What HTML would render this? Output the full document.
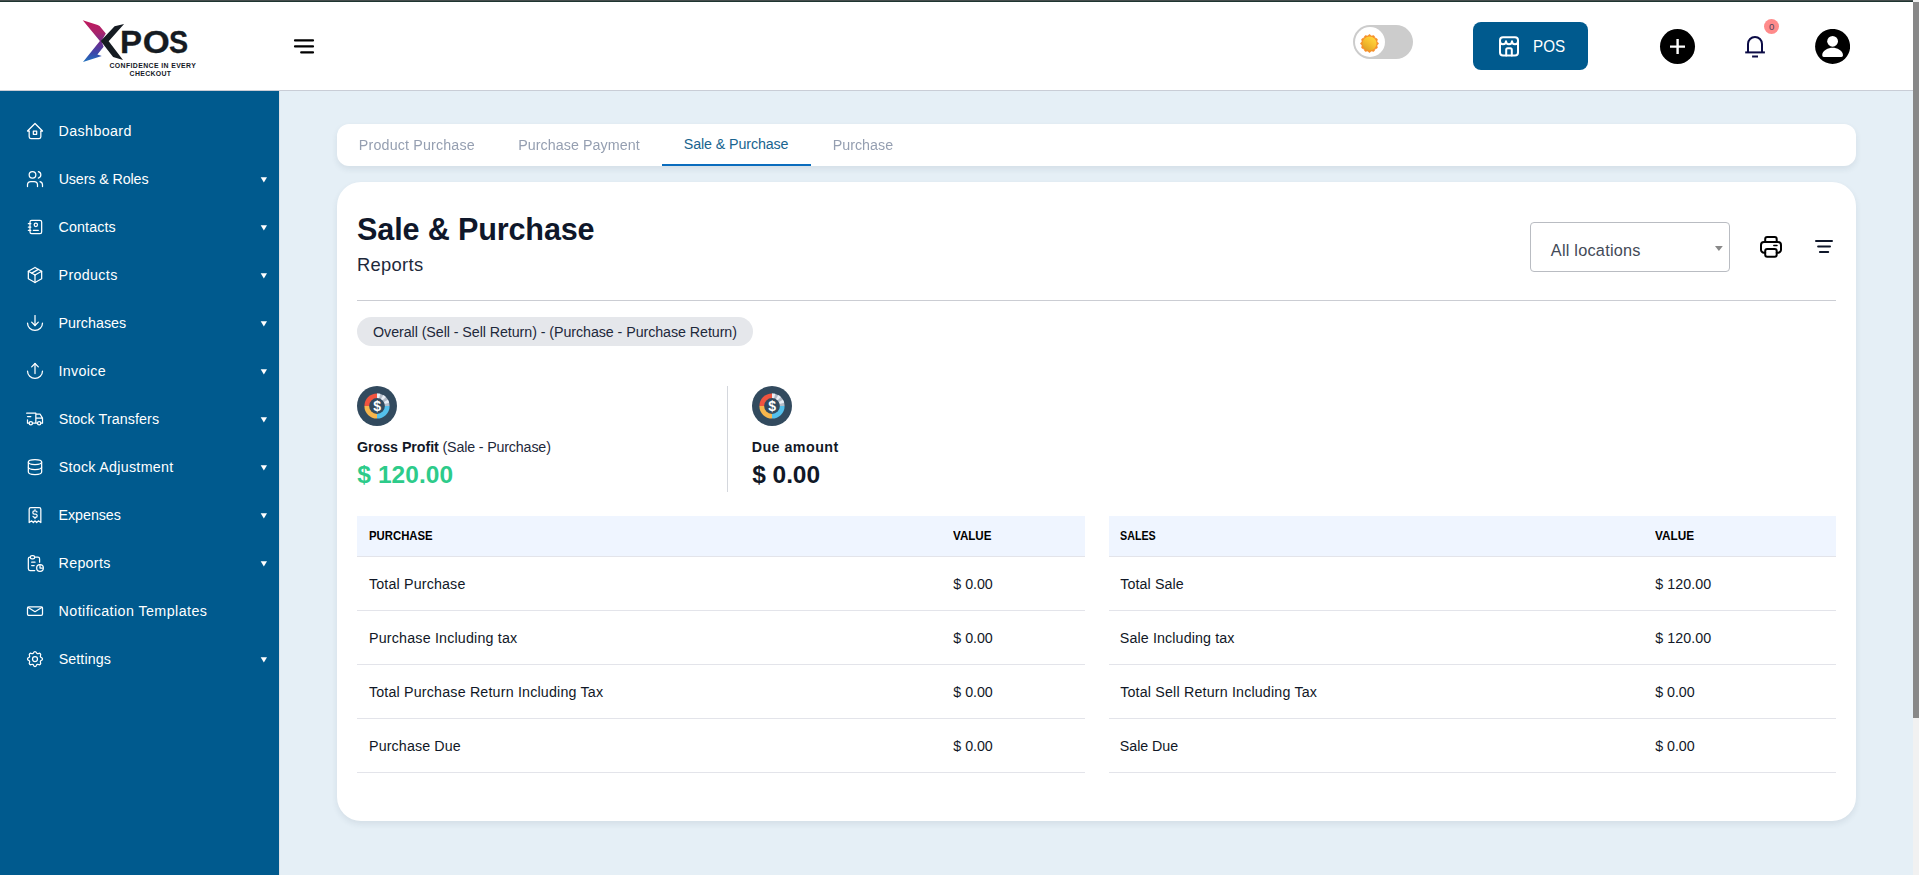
<!DOCTYPE html>
<html lang="en"><head><meta charset="utf-8"><title>Sale &amp; Purchase</title>
<style>
*{box-sizing:border-box;margin:0;padding:0}
html,body{width:1919px;height:875px;overflow:hidden;background:#e5eff6;font-family:"Liberation Sans",sans-serif}
.abs{position:absolute;display:block}
.t{position:absolute;white-space:nowrap;font-family:"Liberation Sans",sans-serif}
.bm{display:inline-block;width:0;height:0}
#page{position:relative;width:1919px;height:875px;overflow:hidden;background:#e5eff6}
</style></head><body><div id="page">
<!-- header -->
<div class="abs" style="left:0;top:0;width:1913px;height:90px;background:#fff"></div>
<div class="abs" style="left:0;top:90px;width:1913px;height:1px;background:#c9cdd6"></div>
<div class="abs" style="left:0;top:0;width:1919px;height:1px;background:#454d4d"></div>
<div class="abs" style="left:0;top:1px;width:1919px;height:1px;background:#1f3531"></div>
<!-- sidebar -->
<div class="abs" style="left:0;top:91px;width:279px;height:784px;background:#005a8e"></div>
<div class="abs" style="left:279px;top:91px;width:1px;height:784px;background:#dfe1e5"></div>
<!-- scrollbar -->
<div class="abs" style="left:1913px;top:0;width:6px;height:875px;background:#f1f1f1"></div>
<div class="abs" style="left:1913px;top:2px;width:6px;height:716px;background:#888"></div>

<!-- logo -->
<svg class="abs" style="left:78px;top:16px" width="60" height="50" viewBox="78 16 60 50">
<defs><linearGradient id="lgx" x1="0" y1="20" x2="0" y2="62" gradientUnits="userSpaceOnUse">
<stop offset="0" stop-color="#c2185b"/><stop offset="0.3" stop-color="#a8246c"/><stop offset="0.55" stop-color="#6a2c91"/><stop offset="0.8" stop-color="#3949ab"/><stop offset="1" stop-color="#1e73be"/></linearGradient></defs>
<polygon points="82.75,20.24 97.7,25.1 99.6,25.9 105.8,33.55 101.5,40.9 103.6,46.7 97.4,54.4 101.8,56.1 83,61.9 99.9,40.9" fill="url(#lgx)"/>
<polygon points="124.07,23.9 114.6,26.2 100.7,40.9 113.1,56.95 123,59.9 108.7,41.2" fill="#151b22"/>
</svg>
<svg class="abs" style="left:118px;top:26px" width="74" height="32" viewBox="118 26 74 32" font-family="Liberation Sans, sans-serif" font-weight="700" font-size="100" fill="#151b22" stroke="#151b22" stroke-width="1">
<text transform="translate(119.99,53.3) scale(0.3304,0.32)">P</text>
<text transform="translate(142.78,53.3) scale(0.3468,0.32)">O</text>
<text transform="translate(168.97,53.3) scale(0.2871,0.32)">S</text>
</svg>

<!-- hamburger -->
<svg class="abs" style="left:290px;top:34px" width="28" height="24" viewBox="290 34 28 24" fill="none" stroke="#000" stroke-width="2.2" stroke-linecap="round">
<path d="M295 40.4H313M295 46.4H313M301.2 52.4H313"/></svg>

<!-- toggle -->
<div class="abs" style="left:1353px;top:25px;width:60px;height:34px;border-radius:17px;background:#ccc"></div>
<div class="abs" style="left:1355px;top:27px;width:30px;height:30px;border-radius:15px;background:#fff"></div>
<svg class="abs" style="left:1358.5px;top:32.5px" width="21" height="21" viewBox="-10.5 -10.5 21 21">
<defs><linearGradient id="sun" x1="0.8" y1="0.1" x2="0.2" y2="0.95"><stop offset="0" stop-color="#ffd63c"/><stop offset="0.45" stop-color="#f7c02f"/><stop offset="1" stop-color="#dfa227"/></linearGradient></defs>
<polygon points="0.00,-8.95 1.99,-7.44 4.47,-7.75 5.44,-5.44 7.75,-4.47 7.44,-1.99 8.95,0.00 7.44,1.99 7.75,4.47 5.44,5.44 4.47,7.75 1.99,7.44 0.00,8.95 -1.99,7.44 -4.47,7.75 -5.44,5.44 -7.75,4.48 -7.44,1.99 -8.95,0.00 -7.44,-1.99 -7.75,-4.48 -5.44,-5.44 -4.48,-7.75 -1.99,-7.44" fill="#f6912b" stroke="#f6912b" stroke-width="0.8" stroke-linejoin="round"/>
<circle r="7.0" fill="url(#sun)"/>
</svg>

<!-- POS button -->
<div class="abs" style="left:1473px;top:22px;width:115px;height:48px;border-radius:8px;background:#005a8e"></div>
<svg class="abs" style="left:1497px;top:34px" width="24" height="24" viewBox="1497 34 24 24" fill="none" stroke="#fff" stroke-width="2" stroke-linecap="round" stroke-linejoin="round">
<rect x="1500" y="37.2" width="18" height="18.4" rx="3"/>
<path d="M1500 41.2a3 3 0 0 0 6 0a3 3 0 0 0 6 0a3 3 0 0 0 6 0" />
<path d="M1506.2 55.6v-5.8a1.5 1.5 0 0 1 1.5 -1.5h2.6a1.5 1.5 0 0 1 1.5 1.5v5.8"/>
</svg>

<!-- plus -->
<div class="abs" style="left:1660px;top:29px;width:35px;height:35px;border-radius:50%;background:#000"></div>
<svg class="abs" style="left:1660px;top:29px" width="35" height="35" viewBox="0 0 35 35" stroke="#fff" stroke-width="2.4" stroke-linecap="butt"><path d="M10 17.6H25M17.6 10V25"/></svg>

<!-- bell -->
<svg class="abs" style="left:1743px;top:33px" width="24" height="27" viewBox="1743 33 24 27" fill="none" stroke="#0b0b45" stroke-width="2" stroke-linecap="butt">
<path d="M1748 52.4V44a7 7 0 0 1 14 0V52.4"/><path d="M1745.2 52.4H1764.9"/><path d="M1752.1 56.5H1758"/></svg>
<div class="abs" style="left:1764px;top:19px;width:15px;height:15px;border-radius:50%;background:#ff8b8b"></div>

<!-- user -->
<svg class="abs" style="left:1815px;top:29px" width="35" height="35" viewBox="1815 29 35 35">
<circle cx="1832.6" cy="46.4" r="17.5" fill="#000"/>
<circle cx="1832.6" cy="41.3" r="5.4" fill="#fff"/>
<path d="M1822.2 55.3c0 -5 6.2 -7.5 10.4 -7.5s10.4 2.5 10.4 7.5a1.6 1.6 0 0 1 -1.6 1.6h-17.6a1.6 1.6 0 0 1 -1.6 -1.6z" fill="#fff"/>
</svg>

<svg class="abs" style="left:25px;top:121px" width="20" height="20" viewBox="0 0 24 24" fill="none" stroke="#fff" stroke-width="1.5" stroke-linecap="round" stroke-linejoin="round"><path d="M5 12l-2 0l9 -9l9 9l-2 0"/><path d="M5 12v7a2 2 0 0 0 2 2h10a2 2 0 0 0 2 -2v-7"/><path d="M10 12h4v4h-4z"/></svg>
<svg class="abs" style="left:25px;top:169px" width="20" height="20" viewBox="0 0 24 24" fill="none" stroke="#fff" stroke-width="1.5" stroke-linecap="round" stroke-linejoin="round"><path d="M9 7m-4 0a4 4 0 1 0 8 0a4 4 0 1 0 -8 0"/><path d="M3 21v-2a4 4 0 0 1 4 -4h4a4 4 0 0 1 4 4v2"/><path d="M16 3.13a4 4 0 0 1 0 7.75"/><path d="M21 21v-2a4 4 0 0 0 -3 -3.85"/></svg>
<svg class="abs" style="left:258px;top:174.6px" width="12" height="10" viewBox="0 0 12 10"><polygon points="2.7,2.3 9,2.3 5.85,7.6" fill="#fff"/></svg>
<svg class="abs" style="left:25px;top:217px" width="20" height="20" viewBox="0 0 24 24" fill="none" stroke="#fff" stroke-width="1.5" stroke-linecap="round" stroke-linejoin="round"><path d="M20 6v12a2 2 0 0 1 -2 2h-10a2 2 0 0 1 -2 -2v-12a2 2 0 0 1 2 -2h10a2 2 0 0 1 2 2z"/><path d="M10 16h6"/><path d="M13 9.4m-2 0a2 2 0 1 0 4 0a2 2 0 1 0 -4 0"/><path d="M4 8h3"/><path d="M4 12h3"/><path d="M4 16h3"/></svg>
<svg class="abs" style="left:258px;top:222.6px" width="12" height="10" viewBox="0 0 12 10"><polygon points="2.7,2.3 9,2.3 5.85,7.6" fill="#fff"/></svg>
<svg class="abs" style="left:25px;top:265px" width="20" height="20" viewBox="0 0 24 24" fill="none" stroke="#fff" stroke-width="1.5" stroke-linecap="round" stroke-linejoin="round"><path d="M12 3l8 4.5l0 9l-8 4.5l-8 -4.5l0 -9l8 -4.5"/><path d="M12 12l8 -4.5"/><path d="M12 12l0 9"/><path d="M12 12l-8 -4.5"/><path d="M16 5.25l-8 4.5"/></svg>
<svg class="abs" style="left:258px;top:270.6px" width="12" height="10" viewBox="0 0 12 10"><polygon points="2.7,2.3 9,2.3 5.85,7.6" fill="#fff"/></svg>
<svg class="abs" style="left:25px;top:313px" width="20" height="20" viewBox="0 0 24 24" fill="none" stroke="#fff" stroke-width="1.5" stroke-linecap="round" stroke-linejoin="round"><path d="M12 3v12"/><path d="M16 11l-4 4l-4 -4"/><path d="M3 12a9 9 0 0 0 18 0"/></svg>
<svg class="abs" style="left:258px;top:318.6px" width="12" height="10" viewBox="0 0 12 10"><polygon points="2.7,2.3 9,2.3 5.85,7.6" fill="#fff"/></svg>
<svg class="abs" style="left:25px;top:361px" width="20" height="20" viewBox="0 0 24 24" fill="none" stroke="#fff" stroke-width="1.5" stroke-linecap="round" stroke-linejoin="round"><path d="M12 15v-12"/><path d="M16 7l-4 -4l-4 4"/><path d="M3 12a9 9 0 0 0 18 0"/></svg>
<svg class="abs" style="left:258px;top:366.6px" width="12" height="10" viewBox="0 0 12 10"><polygon points="2.7,2.3 9,2.3 5.85,7.6" fill="#fff"/></svg>
<svg class="abs" style="left:25px;top:409px" width="20" height="20" viewBox="0 0 24 24" fill="none" stroke="#fff" stroke-width="1.5" stroke-linecap="round" stroke-linejoin="round"><path d="M7 17m-2 0a2 2 0 1 0 4 0a2 2 0 1 0 -4 0"/><path d="M17 17m-2 0a2 2 0 1 0 4 0a2 2 0 1 0 -4 0"/><path d="M5 17h-2v-4m-1 -8h11v12m-4 0h6m4 0h2v-6h-8m0 -5h5l3 5"/><path d="M3 9l4 0"/></svg>
<svg class="abs" style="left:258px;top:414.6px" width="12" height="10" viewBox="0 0 12 10"><polygon points="2.7,2.3 9,2.3 5.85,7.6" fill="#fff"/></svg>
<svg class="abs" style="left:25px;top:457px" width="20" height="20" viewBox="0 0 24 24" fill="none" stroke="#fff" stroke-width="1.5" stroke-linecap="round" stroke-linejoin="round"><path d="M12 6m-8 0a8 3 0 1 0 16 0a8 3 0 1 0 -16 0"/><path d="M4 6v6a8 3 0 0 0 16 0v-6"/><path d="M4 12v6a8 3 0 0 0 16 0v-6"/></svg>
<svg class="abs" style="left:258px;top:462.6px" width="12" height="10" viewBox="0 0 12 10"><polygon points="2.7,2.3 9,2.3 5.85,7.6" fill="#fff"/></svg>
<svg class="abs" style="left:25px;top:505px" width="20" height="20" viewBox="0 0 24 24" fill="none" stroke="#fff" stroke-width="1.5" stroke-linecap="round" stroke-linejoin="round"><path d="M5 21v-16a2 2 0 0 1 2 -2h10a2 2 0 0 1 2 2v16l-3 -2l-2 2l-2 -2l-2 2l-2 -2l-3 2"/><path d="M14.4 8.4a1.9 1.9 0 0 0 -1.7 -1.2h-1.4a1.9 1.9 0 0 0 0 3.8h1.4a1.9 1.9 0 0 1 0 3.8h-1.4a1.9 1.9 0 0 1 -1.7 -1.2M12 5.7v1.5M12 14.8v1.4"/></svg>
<svg class="abs" style="left:258px;top:510.6px" width="12" height="10" viewBox="0 0 12 10"><polygon points="2.7,2.3 9,2.3 5.85,7.6" fill="#fff"/></svg>
<svg class="abs" style="left:25px;top:553px" width="20" height="20" viewBox="0 0 24 24" fill="none" stroke="#fff" stroke-width="1.5" stroke-linecap="round" stroke-linejoin="round"><path d="M6.4 5h-.4a2 2 0 0 0 -2 2v12a2 2 0 0 0 2 2h5.697"/><path d="M18 14v4h3"/><path d="M17.5 11v-4a2 2 0 0 0 -2 -2h-4"/><rect x="6.4" y="3" width="5.2" height="4" rx="2"/><path d="M18 18m-4 0a4 4 0 1 0 8 0a4 4 0 1 0 -8 0"/><path d="M8 11h4"/><path d="M8 15h3"/></svg>
<svg class="abs" style="left:258px;top:558.6px" width="12" height="10" viewBox="0 0 12 10"><polygon points="2.7,2.3 9,2.3 5.85,7.6" fill="#fff"/></svg>
<svg class="abs" style="left:25px;top:601px" width="20" height="20" viewBox="0 0 24 24" fill="none" stroke="#fff" stroke-width="1.5" stroke-linecap="round" stroke-linejoin="round"><path d="M3 8.6a1.6 1.6 0 0 1 1.6 -1.6h14.8a1.6 1.6 0 0 1 1.6 1.6v7a1.6 1.6 0 0 1 -1.6 1.6h-14.8a1.6 1.6 0 0 1 -1.6 -1.6v-7z"/><path d="M3.4 7.6l8.6 5.2l8.6 -5.2"/></svg>
<svg class="abs" style="left:25px;top:649px" width="20" height="20" viewBox="0 0 24 24" fill="none" stroke="#fff" stroke-width="1.5" stroke-linecap="round" stroke-linejoin="round"><path d="M10.325 4.317c.426 -1.756 2.924 -1.756 3.35 0a1.724 1.724 0 0 0 2.573 1.066c1.543 -.94 3.31 .826 2.37 2.37a1.724 1.724 0 0 0 1.065 2.572c1.756 .426 1.756 2.924 0 3.35a1.724 1.724 0 0 0 -1.066 2.573c.94 1.543 -.826 3.31 -2.37 2.37a1.724 1.724 0 0 0 -2.572 1.065c-.426 1.756 -2.924 1.756 -3.35 0a1.724 1.724 0 0 0 -2.573 -1.066c-1.543 .94 -3.31 -.826 -2.37 -2.37a1.724 1.724 0 0 0 -1.065 -2.572c-1.756 -.426 -1.756 -2.924 0 -3.35a1.724 1.724 0 0 0 1.066 -2.573c-.94 -1.543 .826 -3.31 2.37 -2.37c1 .608 2.296 .07 2.572 -1.065z"/><path d="M9 12a3 3 0 1 0 6 0a3 3 0 0 0 -6 0"/></svg>
<svg class="abs" style="left:258px;top:654.6px" width="12" height="10" viewBox="0 0 12 10"><polygon points="2.7,2.3 9,2.3 5.85,7.6" fill="#fff"/></svg>

<!-- tabs card -->
<div class="abs" style="left:337px;top:124px;width:1519px;height:42px;border-radius:12px;background:#fff;box-shadow:0 3px 6px rgba(30,50,80,0.09)"></div>
<div class="abs" style="left:662px;top:164px;width:149px;height:2px;background:#0a6cbd"></div>

<!-- main card -->
<div class="abs" style="left:337px;top:182px;width:1519px;height:639px;border-radius:24px;background:#fff;box-shadow:0 3px 6px rgba(30,50,80,0.09)"></div>
<div class="abs" style="left:357px;top:300px;width:1479px;height:1px;background:#cbcdd3"></div>

<!-- select -->
<div class="abs" style="left:1530px;top:222px;width:200px;height:50px;border:1px solid #b9bcc2;border-radius:4px;background:#fff"></div>
<svg class="abs" style="left:1712px;top:243px" width="14" height="10" viewBox="1712 243 14 10"><polygon points="1715,246 1722.8,246 1718.9,251" fill="#888"/></svg>

<!-- printer -->
<svg class="abs" style="left:1758px;top:234px" width="26" height="26" viewBox="1758 234 26 26" fill="none" stroke="#000" stroke-width="2" stroke-linecap="round" stroke-linejoin="round">
<path d="M1765.2 242.1v-3.2a2 2 0 0 1 2 -2h7.5a2 2 0 0 1 2 2v3.2"/>
<path d="M1765.2 252.7h-1.2a3 3 0 0 1 -3 -3v-4.6a3 3 0 0 1 3 -3h14a3 3 0 0 1 3 3v4.6a3 3 0 0 1 -3 3h-1.3"/>
<rect x="1765.2" y="249.1" width="11.5" height="7.7" rx="2"/>
<path d="M1773.8 245.4h3.2" stroke-width="1.5"/>
</svg>
<!-- filter -->
<svg class="abs" style="left:1812px;top:236px" width="24" height="20" viewBox="1812 236 24 20" fill="none" stroke="#0f172a" stroke-width="2" stroke-linecap="round">
<path d="M1816 240.9H1832M1818.1 246.5H1830M1819.9 252H1828.2"/></svg>

<!-- chip -->
<div class="abs" style="left:357px;top:317px;width:396px;height:29px;border-radius:15px;background:#e5e7eb"></div>

<!-- stats -->
<svg class="abs" style="left:357px;top:386px" width="40" height="40" viewBox="0 0 40 40">
<circle cx="20" cy="20" r="20" fill="#324a5e"/>
<path d="M20 20 L20 7.4 A12.6 12.6 0 0 0 7.4 20 Z" fill="#f1543f"/>
<path d="M20 20 L7.4 20 A12.6 12.6 0 0 0 20 32.6 Z" fill="#f8b64c"/>
<path d="M20 20 L20 32.6 A12.6 12.6 0 0 0 32.6 20 Z" fill="#54c0eb"/>
<path d="M20 20 L32.6 20 A12.6 12.6 0 0 0 20 7.4 Z" fill="#b4bcc8"/>
<path d="M20 20 L20 7.4 A12.6 12.6 0 0 1 23.3 7.85 Z" fill="#e9eef5"/>
<path d="M20 20 L26.3 9.1 A12.6 12.6 0 0 1 28.9 11.1 Z" fill="#e9eef5"/>
<path d="M20 20 L30.9 13.7 A12.6 12.6 0 0 1 32.15 16.7 Z" fill="#e9eef5"/>
<circle cx="20" cy="20" r="7.9" fill="#324a5e"/>
<text x="20.1" y="24.9" text-anchor="middle" font-family="Liberation Sans, sans-serif" font-weight="700" font-size="14" fill="#fff">$</text>
</svg>
<svg class="abs" style="left:752px;top:386px" width="40" height="40" viewBox="0 0 40 40">
<circle cx="20" cy="20" r="20" fill="#324a5e"/>
<path d="M20 20 L20 7.4 A12.6 12.6 0 0 0 7.4 20 Z" fill="#f1543f"/>
<path d="M20 20 L7.4 20 A12.6 12.6 0 0 0 20 32.6 Z" fill="#f8b64c"/>
<path d="M20 20 L20 32.6 A12.6 12.6 0 0 0 32.6 20 Z" fill="#54c0eb"/>
<path d="M20 20 L32.6 20 A12.6 12.6 0 0 0 20 7.4 Z" fill="#b4bcc8"/>
<path d="M20 20 L20 7.4 A12.6 12.6 0 0 1 23.3 7.85 Z" fill="#e9eef5"/>
<path d="M20 20 L26.3 9.1 A12.6 12.6 0 0 1 28.9 11.1 Z" fill="#e9eef5"/>
<path d="M20 20 L30.9 13.7 A12.6 12.6 0 0 1 32.15 16.7 Z" fill="#e9eef5"/>
<circle cx="20" cy="20" r="7.9" fill="#324a5e"/>
<text x="20.1" y="24.9" text-anchor="middle" font-family="Liberation Sans, sans-serif" font-weight="700" font-size="14" fill="#fff">$</text>
</svg>
<div class="abs" style="left:727px;top:386px;width:1px;height:106px;background:#d4d7dd"></div>

<!-- tables -->
<div class="abs" style="left:357px;top:516px;width:728px;height:40px;background:#eff5ff"></div>
<div class="abs" style="left:1109px;top:516px;width:727px;height:40px;background:#eff5ff"></div>
<div class="abs" style="left:357px;top:556px;width:728px;height:1px;background:#e3e4ea"></div><div class="abs" style="left:1109px;top:556px;width:727px;height:1px;background:#e3e4ea"></div><div class="abs" style="left:357px;top:610px;width:728px;height:1px;background:#e3e4ea"></div><div class="abs" style="left:1109px;top:610px;width:727px;height:1px;background:#e3e4ea"></div><div class="abs" style="left:357px;top:664px;width:728px;height:1px;background:#e3e4ea"></div><div class="abs" style="left:1109px;top:664px;width:727px;height:1px;background:#e3e4ea"></div><div class="abs" style="left:357px;top:718px;width:728px;height:1px;background:#e3e4ea"></div><div class="abs" style="left:1109px;top:718px;width:727px;height:1px;background:#e3e4ea"></div><div class="abs" style="left:357px;top:772px;width:728px;height:1px;background:#e3e4ea"></div><div class="abs" style="left:1109px;top:772px;width:727px;height:1px;background:#e3e4ea"></div>

<div class="t" id="m0" style="left:58.56px;top:124.00px;font-size:14.28px;line-height:14.28px;font-weight:400;color:#fff;letter-spacing:0.386px;">Dashboard</div>
<div class="t" id="m1" style="left:58.63px;top:172.00px;font-size:14.28px;line-height:14.28px;font-weight:400;color:#fff;letter-spacing:-0.100px;">Users &amp; Roles</div>
<div class="t" id="m2" style="left:58.59px;top:220.00px;font-size:14.28px;line-height:14.28px;font-weight:400;color:#fff;letter-spacing:0.117px;">Contacts</div>
<div class="t" id="m3" style="left:58.56px;top:268.00px;font-size:14.28px;line-height:14.28px;font-weight:400;color:#fff;letter-spacing:0.349px;">Products</div>
<div class="t" id="m4" style="left:58.56px;top:316.00px;font-size:14.28px;line-height:14.28px;font-weight:400;color:#fff;letter-spacing:0.029px;">Purchases</div>
<div class="t" id="m5" style="left:58.41px;top:364.00px;font-size:14.28px;line-height:14.28px;font-weight:400;color:#fff;letter-spacing:0.357px;">Invoice</div>
<div class="t" id="m6" style="left:58.66px;top:412.00px;font-size:14.28px;line-height:14.28px;font-weight:400;color:#fff;letter-spacing:0.095px;">Stock Transfers</div>
<div class="t" id="m7" style="left:58.66px;top:460.00px;font-size:14.28px;line-height:14.28px;font-weight:400;color:#fff;letter-spacing:0.289px;">Stock Adjustment</div>
<div class="t" id="m8" style="left:58.56px;top:508.00px;font-size:14.28px;line-height:14.28px;font-weight:400;color:#fff;letter-spacing:-0.045px;">Expenses</div>
<div class="t" id="m9" style="left:58.56px;top:556.00px;font-size:14.28px;line-height:14.28px;font-weight:400;color:#fff;letter-spacing:0.298px;">Reports</div>
<div class="t" id="m10" style="left:58.56px;top:604.00px;font-size:14.28px;line-height:14.28px;font-weight:400;color:#fff;letter-spacing:0.431px;">Notification Templates</div>
<div class="t" id="m11" style="left:58.66px;top:652.00px;font-size:14.28px;line-height:14.28px;font-weight:400;color:#fff;letter-spacing:0.099px;">Settings</div>
<div class="t" id="tab0" style="left:358.86px;top:138.00px;font-size:14.28px;line-height:14.28px;font-weight:400;color:#959fb1;letter-spacing:0.160px;will-change:opacity;">Product Purchase</div>
<div class="t" id="tab1" style="left:518.16px;top:138.00px;font-size:14.28px;line-height:14.28px;font-weight:400;color:#959fb1;letter-spacing:0.062px;will-change:opacity;">Purchase Payment</div>
<div class="t" id="tab2" style="left:683.76px;top:137.00px;font-size:14.28px;line-height:14.28px;font-weight:400;color:#19648f;letter-spacing:-0.105px;">Sale &amp; Purchase</div>
<div class="t" id="tab3" style="left:832.66px;top:138.00px;font-size:14.28px;line-height:14.28px;font-weight:400;color:#959fb1;letter-spacing:0.031px;will-change:opacity;">Purchase</div>
<div class="t" id="title" style="left:357.08px;top:214.00px;font-size:30.6px;line-height:30.6px;font-weight:700;color:#0f172a;letter-spacing:-0.161px;">Sale &amp; Purchase</div>
<div class="t" id="sub" style="left:356.93px;top:256.00px;font-size:18.36px;line-height:18.36px;font-weight:400;color:#1e293b;letter-spacing:0.319px;">Reports</div>
<div class="t" id="chip" style="left:373.06px;top:325.00px;font-size:14.28px;line-height:14.28px;font-weight:400;color:#1e293b;letter-spacing:-0.068px;">Overall (Sell - Sell Return) - (Purchase - Purchase Return)</div>
<div class="t" id="sel" style="left:1550.80px;top:242.00px;font-size:16.32px;line-height:16.32px;font-weight:400;color:#434a57;letter-spacing:0.219px;">All locations</div>
<div class="t" id="pos" style="left:1532.74px;top:38.00px;font-size:17px;line-height:17px;font-weight:400;color:#fff;letter-spacing:0.000px;transform:scaleX(0.8949);transform-origin:0 0;">POS</div>
<div class="t" id="gp1" style="left:357.03px;top:440.00px;font-size:14.28px;line-height:14.28px;font-weight:700;color:#111827;letter-spacing:-0.054px;">Gross Profit</div>
<div class="t" id="gp2" style="left:442.44px;top:440.00px;font-size:14.28px;line-height:14.28px;font-weight:400;color:#1e293b;letter-spacing:-0.159px;">(Sale - Purchase)</div>
<div class="t" id="gpv" style="left:357.33px;top:463.00px;font-size:24.48px;line-height:24.48px;font-weight:700;color:#2dcb8a;letter-spacing:0.075px;">$ 120.00</div>
<div class="t" id="du1" style="left:751.67px;top:440.00px;font-size:14.28px;line-height:14.28px;font-weight:700;color:#111827;letter-spacing:0.464px;">Due amount</div>
<div class="t" id="duv" style="left:752.33px;top:463.00px;font-size:24.48px;line-height:24.48px;font-weight:700;color:#111827;letter-spacing:-0.071px;">$ 0.00</div>
<div class="t" id="thl1" style="left:368.56px;top:530.00px;font-size:12.24px;line-height:12.24px;font-weight:700;color:#000;letter-spacing:0.000px;transform:scaleX(0.9270);transform-origin:0 0;">PURCHASE</div>
<div class="t" id="thl2" style="left:953.44px;top:530.00px;font-size:12.24px;line-height:12.24px;font-weight:700;color:#000;letter-spacing:0.000px;transform:scaleX(0.9489);transform-origin:0 0;">VALUE</div>
<div class="t" id="thr1" style="left:1120.18px;top:530.00px;font-size:12.24px;line-height:12.24px;font-weight:700;color:#000;letter-spacing:0.000px;transform:scaleX(0.8755);transform-origin:0 0;">SALES</div>
<div class="t" id="thr2" style="left:1655.34px;top:530.00px;font-size:12.24px;line-height:12.24px;font-weight:700;color:#000;letter-spacing:0.000px;transform:scaleX(0.9638);transform-origin:0 0;">VALUE</div>
<div class="t" id="tl0" style="left:368.91px;top:577.00px;font-size:14.28px;line-height:14.28px;font-weight:400;color:#111827;letter-spacing:0.159px;">Total Purchase</div>
<div class="t" id="tlv0" style="left:953.36px;top:577.00px;font-size:14.28px;line-height:14.28px;font-weight:400;color:#111827;letter-spacing:-0.043px;">$ 0.00</div>
<div class="t" id="tl1" style="left:369.06px;top:631.00px;font-size:14.28px;line-height:14.28px;font-weight:400;color:#111827;letter-spacing:0.184px;">Purchase Including tax</div>
<div class="t" id="tlv1" style="left:953.36px;top:631.00px;font-size:14.28px;line-height:14.28px;font-weight:400;color:#111827;letter-spacing:-0.043px;">$ 0.00</div>
<div class="t" id="tl2" style="left:368.91px;top:685.00px;font-size:14.28px;line-height:14.28px;font-weight:400;color:#111827;letter-spacing:0.177px;">Total Purchase Return Including Tax</div>
<div class="t" id="tlv2" style="left:953.36px;top:685.00px;font-size:14.28px;line-height:14.28px;font-weight:400;color:#111827;letter-spacing:-0.043px;">$ 0.00</div>
<div class="t" id="tl3" style="left:369.06px;top:739.00px;font-size:14.28px;line-height:14.28px;font-weight:400;color:#111827;letter-spacing:0.118px;">Purchase Due</div>
<div class="t" id="tlv3" style="left:953.36px;top:739.00px;font-size:14.28px;line-height:14.28px;font-weight:400;color:#111827;letter-spacing:-0.043px;">$ 0.00</div>
<div class="t" id="tr0" style="left:1120.21px;top:577.00px;font-size:14.28px;line-height:14.28px;font-weight:400;color:#111827;letter-spacing:0.099px;">Total Sale</div>
<div class="t" id="trv0" style="left:1655.26px;top:577.00px;font-size:14.28px;line-height:14.28px;font-weight:400;color:#111827;letter-spacing:0.061px;">$ 120.00</div>
<div class="t" id="tr1" style="left:1119.86px;top:631.00px;font-size:14.28px;line-height:14.28px;font-weight:400;color:#111827;letter-spacing:0.115px;">Sale Including tax</div>
<div class="t" id="trv1" style="left:1655.26px;top:631.00px;font-size:14.28px;line-height:14.28px;font-weight:400;color:#111827;letter-spacing:0.061px;">$ 120.00</div>
<div class="t" id="tr2" style="left:1120.21px;top:685.00px;font-size:14.28px;line-height:14.28px;font-weight:400;color:#111827;letter-spacing:0.170px;">Total Sell Return Including Tax</div>
<div class="t" id="trv2" style="left:1655.26px;top:685.00px;font-size:14.28px;line-height:14.28px;font-weight:400;color:#111827;letter-spacing:-0.043px;">$ 0.00</div>
<div class="t" id="tr3" style="left:1119.86px;top:739.00px;font-size:14.28px;line-height:14.28px;font-weight:400;color:#111827;letter-spacing:-0.069px;">Sale Due</div>
<div class="t" id="trv3" style="left:1655.26px;top:739.00px;font-size:14.28px;line-height:14.28px;font-weight:400;color:#111827;letter-spacing:-0.043px;">$ 0.00</div>
<div class="t" id="badge" style="left:1768.92px;top:22.00px;font-size:9.6px;line-height:9.6px;font-weight:400;color:#4a4460;letter-spacing:0.000px;">0</div>
<div class="t" id="lg1" style="left:109.52px;top:63.00px;font-size:6.9px;line-height:6.9px;font-weight:700;color:#14181f;letter-spacing:0.383px;">CONFIDENCE IN EVERY</div>
<div class="t" id="lg2" style="left:129.62px;top:71.00px;font-size:6.9px;line-height:6.9px;font-weight:700;color:#14181f;letter-spacing:0.329px;">CHECKOUT</div>
</div></body></html>
